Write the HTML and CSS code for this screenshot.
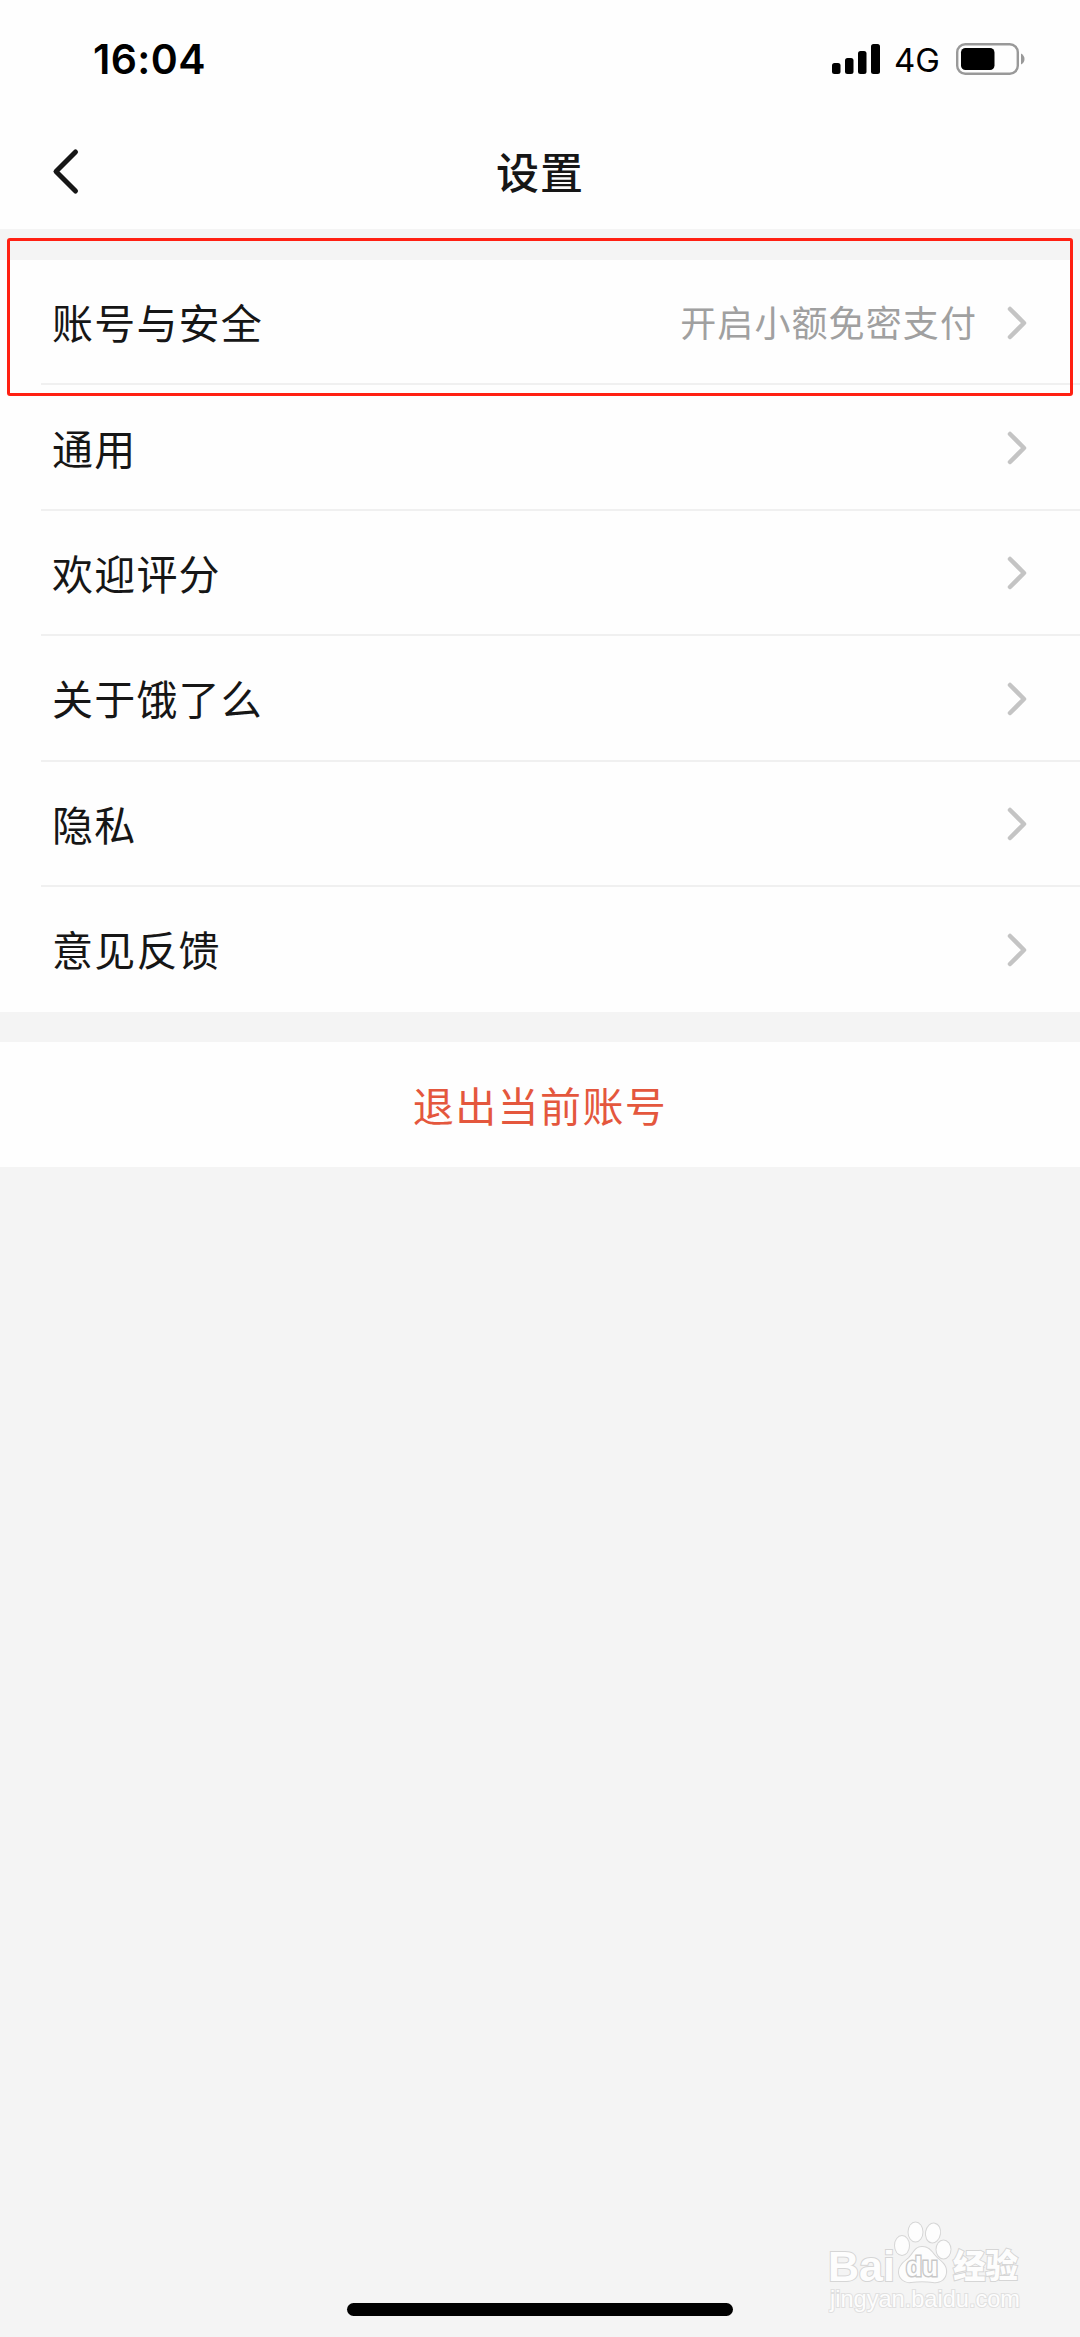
FILE: index.html
```html
<!DOCTYPE html>
<html lang="zh-CN">
<head>
  <meta charset="utf-8">
  <title>设置</title>
  <link rel="stylesheet" href="styles.css">
</head>
<body>
  <div class="status-bar">
    <span class="clock">16:04</span>
    <div class="status-right">
      <svg class="signal" width="48" height="30" viewBox="0 0 48 30">
        <rect x="0" y="19" width="8.5" height="11" rx="2.5"/>
        <rect x="13" y="14" width="8.5" height="16" rx="2.5"/>
        <rect x="26" y="7" width="8.5" height="23" rx="2.5"/>
        <rect x="39" y="0" width="9" height="30" rx="2.5"/>
      </svg>
      <span class="network">4G</span>
      <svg class="battery" width="69" height="32" viewBox="0 0 69 32">
        <rect x="1.2" y="1.2" width="60.6" height="29.6" rx="8" fill="none" stroke="#999" stroke-width="2.4"/>
        <rect x="5" y="5" width="33.5" height="22" rx="4.5"/>
        <path d="M65 10.500q3.500 2 3.500 5.500t-3.500 5.500z" fill="#999"/>
      </svg>
    </div>
  </div>

  <div class="nav">
    <svg class="back" width="28" height="48" viewBox="0 0 28 48">
      <path d="M23.500 4L4 23.500L23.500 43"/>
    </svg>
    <h1 class="title">设置</h1>
  </div>

  <div class="list">
    <div class="row">
      <span class="label">账号与安全</span>
      <span class="hint">开启小额免密支付</span>
      <svg class="arrow" width="20" height="34" viewBox="0 0 20 34"><path d="M3 3L17 17L3 31"/></svg>
    </div>
    <div class="row">
      <span class="label">通用</span>
      <svg class="arrow" width="20" height="34" viewBox="0 0 20 34"><path d="M3 3L17 17L3 31"/></svg>
    </div>
    <div class="row">
      <span class="label">欢迎评分</span>
      <svg class="arrow" width="20" height="34" viewBox="0 0 20 34"><path d="M3 3L17 17L3 31"/></svg>
    </div>
    <div class="row">
      <span class="label">关于饿了么</span>
      <svg class="arrow" width="20" height="34" viewBox="0 0 20 34"><path d="M3 3L17 17L3 31"/></svg>
    </div>
    <div class="row">
      <span class="label">隐私</span>
      <svg class="arrow" width="20" height="34" viewBox="0 0 20 34"><path d="M3 3L17 17L3 31"/></svg>
    </div>
    <div class="row">
      <span class="label">意见反馈</span>
      <svg class="arrow" width="20" height="34" viewBox="0 0 20 34"><path d="M3 3L17 17L3 31"/></svg>
    </div>
  </div>

  <div class="logout">退出当前账号</div>

  <!-- Overlays -->
  <div class="highlight"></div>

  <svg class="watermark" width="200" height="100" viewBox="0 0 200 100">
    <g class="mark">
      <text class="brand" x="0" y="61" textLength="67" lengthAdjust="spacingAndGlyphs">Bai</text>
      <ellipse cx="74" cy="25.500" rx="7" ry="9.500"/>
      <ellipse cx="87.500" cy="12" rx="7" ry="9.500"/>
      <ellipse cx="105" cy="13" rx="7" ry="9.500" transform="rotate(10 105 13)"/>
      <ellipse cx="115.500" cy="29.500" rx="7" ry="9"/>
      <path d="M94 27c8 0 10 6 15 11c5 4 10 8 9 15c-1 7-7 10-13 9c-7-1-15-1-22 0c-7 1-12-4-12-10c0-6 5-10 10-14c5-5 6-11 13-11z"/>
      <text class="du" x="78" y="56" textLength="32" lengthAdjust="spacingAndGlyphs">du</text>
      <text class="jingyan" x="125" y="58" textLength="65" lengthAdjust="spacingAndGlyphs">经验</text>
      <text class="site" x="2" y="87" textLength="190" lengthAdjust="spacingAndGlyphs">jingyan.baidu.com</text>
    </g>
  </svg>

  <div class="home-bar"></div>
</body>
</html>
```
FILE: styles.css
```css
* {
  box-sizing: border-box;
}

body {
  margin: 0;
  position: relative;
  height: 2337px;
  overflow: hidden;
  background-color: #f4f4f4;
  color: #161616;
  font-family: "Noto Sans CJK SC", sans-serif;
}

/* Status bar */
.status-bar {
  display: flex;
  justify-content: space-between;
  align-items: center;
  height: 117px;
  padding: 0 55px 0 93px;
  background-color: #fefefe;
  color: #000;
  font-family: Inter, sans-serif;
}

.clock {
  font-size: 41px;
  font-weight: 600;
  letter-spacing: 0.4px;
}

.status-right {
  display: flex;
  align-items: center;
}

.network {
  margin: 2px 16px 0 14px;
  font-size: 33px;
  font-weight: 400;
}

/* Title bar */
.nav {
  display: grid;
  grid-template-columns: 120px 1fr 120px;
  align-items: center;
  height: 112px;
  padding-bottom: 4px;
  background-color: #fefefe;
}

.back {
  margin: 1px 0 0 52px;
  fill: none;
  stroke: #161616;
  stroke-width: 5;
  stroke-linecap: round;
  stroke-linejoin: round;
}

.title {
  margin: 0;
  padding-bottom: 3px;
  text-align: center;
  font-size: 43px;
  font-weight: 500;
  letter-spacing: 1px;
}

/* Settings list */
.list {
  margin-top: 31px;
  padding-left: 41px;
  background-color: #fefefe;
}

.row {
  display: flex;
  align-items: center;
  height: 125.4px;
  padding: 2px 53px 0 11px;
  border-bottom: 2px solid #f0f0f0;
}

.row:last-child {
  padding-bottom: 2px;
  border-bottom: none;
}

.label {
  flex: 1;
  padding-bottom: 3px;
  font-size: 41px;
  letter-spacing: 1.2px;
}

.hint {
  margin-right: 30px;
  padding-bottom: 3px;
  color: #a0a0a0;
  font-size: 36px;
  letter-spacing: 1.1px;
}

.arrow {
  fill: none;
  stroke: #c4c4c4;
  stroke-width: 4.5;
  stroke-linecap: round;
  stroke-linejoin: round;
}

.logout {
  display: flex;
  justify-content: center;
  align-items: center;
  height: 125px;
  margin-top: 30px;
  padding-bottom: 1px;
  background-color: #fefefe;
  color: #e4573d;
  font-size: 41px;
  letter-spacing: 1.4px;
}

/* Red frame round the first row */
.highlight {
  position: absolute;
  top: 238px;
  left: 7px;
  width: 1066px;
  height: 158px;
  border: 3px solid #ff2012;
  border-radius: 3px;
}

.watermark {
  position: absolute;
  top: 2220px;
  left: 828px;
}

.mark {
  fill: #fdfdfd;
  stroke: #d6d6d6;
  stroke-width: 2;
  paint-order: stroke;
  font-family: "Liberation Sans", sans-serif;
}

.brand {
  font-size: 43px;
  font-weight: bold;
}

.du {
  font-size: 28px;
  font-weight: bold;
  stroke: #c8c8c8;
  stroke-width: 3;
}

.jingyan {
  font-family: "Noto Sans CJK SC", sans-serif;
  font-size: 33px;
  font-weight: 900;
}

.site {
  font-size: 24px;
  stroke: #e0e0e0;
}

.home-bar {
  position: absolute;
  bottom: 21px;
  left: 347px;
  width: 386px;
  height: 13px;
  border-radius: 7px;
  background-color: #000;
}
```
